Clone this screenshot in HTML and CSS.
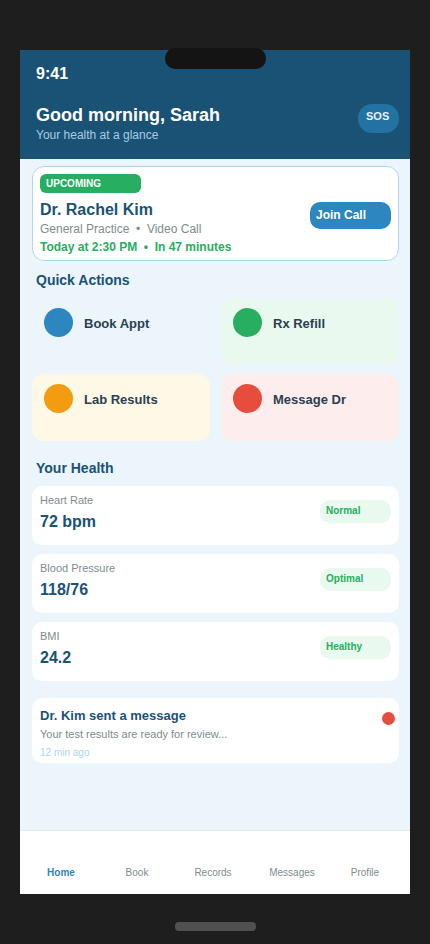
FILE: index.html
```html
<!DOCTYPE html>
<html lang="en">

<head>
    <meta charset="UTF-8">
    <meta name="viewport" content="width=device-width, initial-scale=1.0">
    <title>Health</title>
    <link rel="stylesheet" href="styles.css">
</head>

<body>
    <div class="phone">
        <div class="notch"></div>
        <div class="screen">
            <header class="header">
                <div class="time">9:41</div>
                <div class="header-row">
                    <div>
                        <h1 class="greeting">Good morning, Sarah</h1>
                        <div class="subtitle">Your health at a glance</div>
                    </div>
                    <button type="button" class="sos">SOS</button>
                </div>
            </header>

            <main class="content">
                <section class="appointment">
                    <div>
                        <div class="badge">UPCOMING</div>
                        <h2 class="doctor">Dr. Rachel Kim</h2>
                        <div class="detail">General Practice &nbsp;•&nbsp; Video Call</div>
                        <div class="detail when">Today at 2:30 PM &nbsp;•&nbsp; In 47 minutes</div>
                    </div>
                    <button type="button" class="join">Join Call</button>
                </section>

                <h2 class="section-title">Quick Actions</h2>
                <div class="actions">
                    <button type="button" class="action book">
                        <span class="circle"></span>
                        <span class="action-label">Book Appt</span>
                    </button>
                    <button type="button" class="action refill">
                        <span class="circle"></span>
                        <span class="action-label">Rx Refill</span>
                    </button>
                    <button type="button" class="action lab">
                        <span class="circle"></span>
                        <span class="action-label">Lab Results</span>
                    </button>
                    <button type="button" class="action message-dr">
                        <span class="circle"></span>
                        <span class="action-label">Message Dr</span>
                    </button>
                </div>

                <h2 class="section-title health-title">Your Health</h2>
                <div class="metrics">
                    <div class="metric">
                        <div>
                            <div class="metric-name">Heart Rate</div>
                            <div class="metric-value">72 bpm</div>
                        </div>
                        <div class="status">Normal</div>
                    </div>
                    <div class="metric">
                        <div>
                            <div class="metric-name">Blood Pressure</div>
                            <div class="metric-value">118/76</div>
                        </div>
                        <div class="status">Optimal</div>
                    </div>
                    <div class="metric">
                        <div>
                            <div class="metric-name">BMI</div>
                            <div class="metric-value">24.2</div>
                        </div>
                        <div class="status">Healthy</div>
                    </div>
                </div>

                <section class="message">
                    <div>
                        <h3 class="message-title">Dr. Kim sent a message</h3>
                        <div class="message-text">Your test results are ready for review...</div>
                        <div class="message-time">12 min ago</div>
                    </div>
                    <span class="unread"></span>
                </section>
            </main>

            <nav class="nav">
                <a href="#" class="active">Home</a>
                <a href="#">Book</a>
                <a href="#">Records</a>
                <a href="#">Messages</a>
                <a href="#">Profile</a>
            </nav>
        </div>
        <div class="home-bar"></div>
    </div>
</body>

</html>
```
FILE: styles.css
```css
* {
    box-sizing: border-box;
}

body {
    margin: 0;
    background-color: #1e1e1e;
    font-family: "Liberation Sans", Arial, sans-serif;
}

h1,
h2,
h3 {
    margin: 0;
}

button {
    border: none;
    font-family: inherit;
    text-align: left;
    cursor: pointer;
}

.phone {
    position: relative;
    min-height: 100vh;
    padding: 50px 20px 13px;
    display: flex;
    flex-direction: column;
}

/* sits over the top edge of the screen */
.notch {
    position: absolute;
    top: 48px;
    left: 50%;
    width: 101px;
    height: 21px;
    margin-left: -50px;
    border-radius: 10px;
    background-color: #141414;
}

.screen {
    flex: 1;
    display: flex;
    flex-direction: column;
    background-color: #ebf5fb;
}

/* header */
.header {
    padding: 15px 11px 17px 16px;
    background-color: #1a5276;
    color: #fff;
}

.time {
    margin-bottom: 21px;
    font-size: 16px;
    line-height: 18px;
    font-weight: bold;
}

.header-row {
    display: flex;
    justify-content: space-between;
    align-items: flex-start;
}

.greeting {
    font-size: 18px;
    line-height: 22px;
}

.subtitle {
    margin-top: 2px;
    font-size: 12px;
    line-height: 14px;
    color: #a9cce3;
}

.sos {
    width: 41px;
    padding: 6px 8px 10px;
    border-radius: 14px;
    background-color: #2471a3;
    color: #ebf5fb;
    font-size: 11px;
    line-height: 13px;
    font-weight: bold;
}

.content {
    flex: 1;
    padding: 7px 11px 7px 12px;
}

/* next appointment */
.appointment {
    display: flex;
    justify-content: space-between;
    align-items: center;
    padding: 7px 7px 4px;
    border: 1px solid #aed6f1;
    border-radius: 12px;
    background-color: #fff;
}

.badge {
    width: 101px;
    margin-bottom: 7px;
    padding: 4px 6px;
    border-radius: 6px;
    background-color: #27ae60;
    color: #fff;
    font-size: 10px;
    line-height: 11px;
    font-weight: bold;
}

.doctor {
    color: #1a5276;
    font-size: 16px;
    line-height: 20px;
}

.detail {
    color: #7f8c8d;
    font-size: 12px;
    line-height: 18px;
}

.when {
    color: #27ae60;
    font-weight: bold;
}

.join {
    width: 81px;
    padding: 6px 6px 7px;
    border-radius: 10px;
    background-color: #2e86c1;
    color: #fff;
    font-size: 12px;
    line-height: 14px;
    font-weight: bold;
}

.section-title {
    margin: 11px 4px 10px;
    color: #1a5276;
    font-size: 14px;
    line-height: 16px;
}

.health-title {
    margin-top: 19px;
}

/* quick actions */
.actions {
    display: grid;
    grid-template-columns: 1fr 1fr;
    gap: 9px 11px;
}

.action {
    display: flex;
    align-items: flex-start;
    gap: 11px;
    padding: 10px 12px 25px;
    border-radius: 12px;
    color: #2c3e50;
    font-size: 13px;
    line-height: 32px;
    font-weight: bold;
}

.circle {
    width: 29px;
    height: 29px;
    border-radius: 50%;
}

.book {
    background-color: #ebf5fb;
}

.book .circle {
    background-color: #2e86c1;
}

.refill {
    background-color: #e9f9ef;
}

.refill .circle {
    background-color: #27ae60;
}

.lab {
    background-color: #fef9e7;
}

.lab .circle {
    background-color: #f39c12;
}

.message-dr {
    background-color: #fdedec;
}

.message-dr .circle {
    background-color: #e74c3c;
}

/* health metrics */
.metrics {
    display: flex;
    flex-direction: column;
    gap: 9px;
}

.metric {
    display: flex;
    justify-content: space-between;
    align-items: flex-start;
    padding: 8px 8px 14px;
    border-radius: 10px;
    background-color: #fff;
}

.metric-name {
    margin-bottom: 6px;
    color: #7f8c8d;
    font-size: 11px;
    line-height: 13px;
}

.metric-value {
    color: #1a5276;
    font-size: 16px;
    line-height: 18px;
    font-weight: bold;
}

.status {
    width: 71px;
    margin-top: 6px;
    padding: 5px 6px 7px;
    border-radius: 10px;
    background-color: #e9f9ef;
    color: #27ae60;
    font-size: 10px;
    line-height: 11px;
    font-weight: bold;
}

/* message */
.message {
    display: flex;
    justify-content: space-between;
    align-items: flex-start;
    margin-top: 17px;
    padding: 10px 4px 5px 8px;
    border-radius: 10px;
    background-color: #fff;
}

.message-title {
    color: #1a5276;
    font-size: 13px;
    line-height: 15px;
}

.message-text {
    margin: 5px 0 6px;
    color: #7f8c8d;
    font-size: 11px;
    line-height: 13px;
}

.message-time {
    color: #aed6f1;
    font-size: 10px;
    line-height: 11px;
}

.unread {
    width: 13px;
    height: 13px;
    margin-top: 4px;
    border-radius: 50%;
    background-color: #e74c3c;
}

/* bottom navigation */
.nav {
    display: grid;
    grid-template-columns: 76fr 76fr 76fr 82fr 64fr;
    padding: 36px 13px 16px 3px;
    border-top: 1px solid #e5e8e8;
    background-color: #fff;
    text-align: center;
}

.nav a {
    color: #7f8c8d;
    font-size: 10px;
    line-height: 11px;
    text-decoration: none;
}

.nav .active {
    color: #2e86c1;
    font-weight: bold;
}

.home-bar {
    width: 81px;
    height: 9px;
    margin: 28px auto 0;
    border-radius: 4px;
    background-color: #505050;
}
```
